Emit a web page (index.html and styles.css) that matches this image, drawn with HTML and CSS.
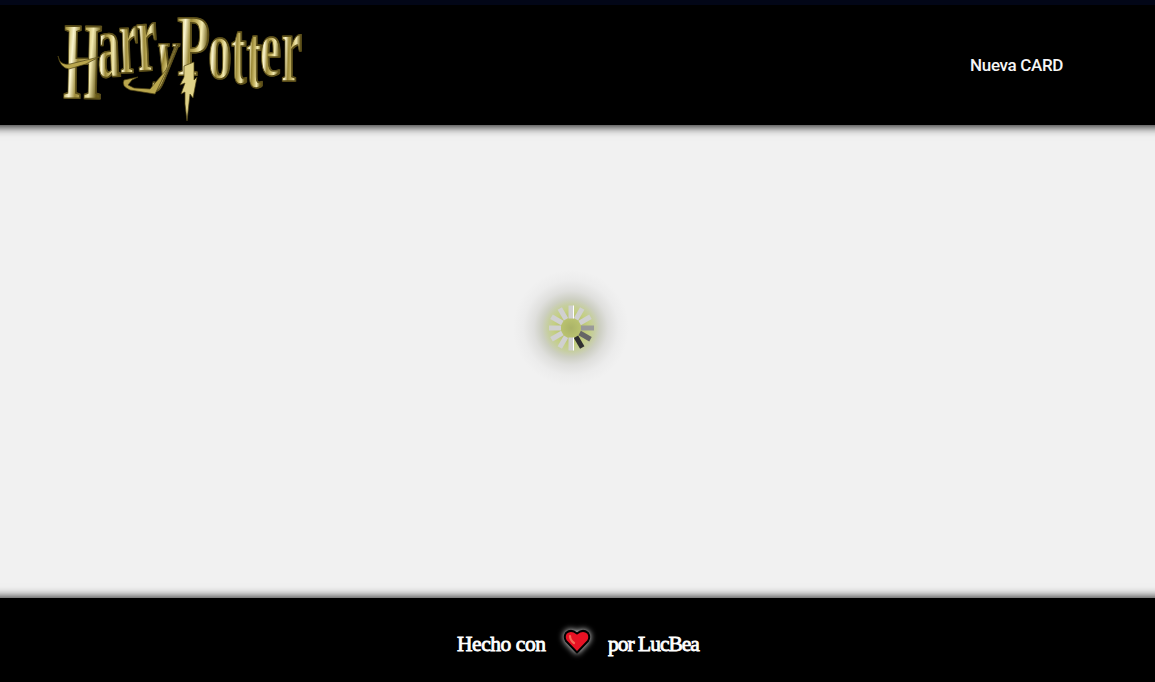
FILE: index.html
```html
<!DOCTYPE html>
<html lang="es">
<head>
<meta charset="utf-8">
<title>Harry Potter</title>
<link rel="stylesheet" href="styles.css">
</head>
<body>
<header class="header">
  <svg class="logo" width="250" height="110" viewBox="55 14 250 110" role="img" aria-label="Harry Potter">
    <defs>
      <linearGradient id="gold" x1="0" x2="1" y1="0" y2=".2">
        <stop offset="0" stop-color="#776820"/><stop offset=".16" stop-color="#c8b864"/><stop offset=".3" stop-color="#fbf5cf"/><stop offset=".46" stop-color="#9b8938"/><stop offset=".65" stop-color="#c9b868"/><stop offset=".8" stop-color="#f3eab1"/><stop offset="1" stop-color="#6b5c18"/>
      </linearGradient>
    </defs>
    <g class="letters" fill="url(#gold)">
      <text transform="translate(63 98) rotate(1) scale(.48 1.1)">H</text>
      <text transform="translate(98 77) rotate(-2) scale(.45 .92)">a</text>
      <text transform="translate(120 73) rotate(-2) scale(.42 .97)">r</text>
      <text transform="translate(138 71) rotate(-3) scale(.45 1)">r</text>
      <text transform="translate(153 76) skewX(-9) scale(.43 .7)">y</text>
      <text transform="translate(177 75) scale(.53 .87)">P</text>
      <text transform="translate(208 78) scale(.46 .84)">o</text>
      <text transform="translate(231 83) scale(.45 .92)">t</text>
      <text transform="translate(246 87) scale(.47 .92)">t</text>
      <text transform="translate(260 75) scale(.46 .8)">e</text>
      <text transform="translate(281 81) scale(.46 .97)">r</text>
    </g>
    <g class="flourish">
      <path d="M58 56Q60 66 70 64L99 57L86 64L69 69Q60 68 58 56Z"/>
      <path d="M138 77L132 80L128 85L134 88L150 89L166 70L174 50L177 44L169 66L155 94L130 90Q121 86 124 80Z"/>
      <path class="bolt" d="M184 66L194 62L194 80L197 77L193 98L190 94L187 121L185 104L185 92L181 94L185 83L180 85L184 77Z"/>
    </g>
  </svg>
  <nav class="nav"><a class="nav-link">Nueva CARD</a></nav>
</header>
<main class="main">
  <svg class="spinner" width="140" height="140" viewBox="-70 -70 140 140" aria-label="Cargando">
    <defs>
      <radialGradient id="glow" gradientUnits="userSpaceOnUse" cx="0" cy="0" r="58">
        <stop offset="0" stop-color="#abb368"/><stop offset=".16" stop-color="#b8c16f"/><stop offset=".3" stop-color="#c4cf83"/><stop offset=".4" stop-color="#c6cea0"/><stop offset=".5" stop-color="#cdcfc3"/><stop offset=".64" stop-color="#dfdfdd"/><stop offset=".82" stop-color="#ececec"/><stop offset="1" stop-color="#f1f1f1"/>
      </radialGradient>
    </defs>
    <circle r="58" fill="url(#glow)"/>
    <g fill="#d0d0d0">
      <rect x="-2.500" y="-22.500" width="5" height="13"/>
      <rect x="-2.500" y="-22.500" width="5" height="12.500" transform="rotate(30)"/>
      <rect x="-2.500" y="-22.500" width="5" height="12.500" transform="rotate(60)"/>
      <rect fill="#999" x="-2.500" y="-23" width="5" height="13" transform="rotate(90)"/>
      <rect fill="#666" x="-2.500" y="-22.500" width="5" height="12.500" transform="rotate(120)"/>
      <rect fill="#303030" x="-2.500" y="-22.500" width="5" height="12.500" transform="rotate(150)"/>
      <rect x="-2.500" y="-22.500" width="5" height="13" transform="rotate(180)"/>
      <rect x="-2.500" y="-22.500" width="5" height="12.500" transform="rotate(210)"/>
      <rect x="-2.500" y="-22.500" width="5" height="12.500" transform="rotate(240)"/>
      <rect x="-2.500" y="-22" width="5" height="12" transform="rotate(270)"/>
      <rect x="-2.500" y="-22.500" width="5" height="12.500" transform="rotate(300)"/>
      <rect x="-2.500" y="-22.500" width="5" height="12.500" transform="rotate(330)"/>
    </g>
    <path fill="#fff" d="M2-22.500h1v13h-1zM2 9.500h1v13h-1z"/>
  </svg>
</main>
<footer class="footer">
  <span class="made">Hecho con</span>
  <svg class="heart" width="28" height="26" viewBox="0 0 28 26">
    <path d="M14 23.500L3 12Q.5 8 3 4Q8-.5 14 4.500Q20-.5 25 4Q27.500 8 25 12Z" fill="#e81224" stroke="#000" stroke-width="2" stroke-linejoin="round"/>
    <path d="M7 7Q7 11 11 14" fill="none" stroke="#f46a55" stroke-width="2.200" stroke-linecap="round"/>
  </svg>
  <span class="author">por LucBea</span>
</footer>
</body>
</html>
```
FILE: styles.css
```css
* { box-sizing: border-box; }
body {
  margin: 0;
  height: 682px;
  display: flex;
  flex-direction: column;
  overflow: hidden;
  background: #f1f1f1;
}
.header {
  height: 125px;
  flex: none;
  display: flex;
  align-items: flex-start;
  justify-content: space-between;
  margin: 0 -12px;
  padding: 9px 104px 0 67px;
  background: #000;
  border-top: 5px solid #020617;
  box-shadow: 0 1px 10px #000;
}
.logo { overflow: visible; }
.letters {
  font: bold 100px "Liberation Serif", serif;
  filter: drop-shadow(1.500px 0 0 #5d501a);
}
.letters text {
  stroke: #5d501a;
  stroke-width: 1.200px;
  vector-effect: non-scaling-stroke;
}
.flourish {
  fill: #b9a64d;
  stroke: #4d4212;
  stroke-width: .7;
}
.bolt { fill: #dfd288; }
.nav { padding-top: 41px; }
.nav-link {
  font: 500 17px/20px Roboto, sans-serif;
  letter-spacing: -.35px;
  color: #f5f5f5;
}
.main {
  flex: 1;
  display: flex;
  justify-content: center;
  padding: 132.500px 13px 0 0;
}
.footer {
  height: 84px;
  flex: none;
  display: flex;
  margin: 0 -12px;
  padding: 31px 0 0 469px;
  background: #000;
  color: #fff;
  font: 21.500px/30px "Liberation Serif", serif;
  letter-spacing: -.45px;
  -webkit-text-stroke: .8px #fff;
  box-shadow: 0 0 10px #000;
}
.made { width: 106px; }
.author { letter-spacing: -1px; }
.heart {
  margin-right: 17px;
  overflow: visible;
  filter: drop-shadow(0 0 3px #fff);
}
```
